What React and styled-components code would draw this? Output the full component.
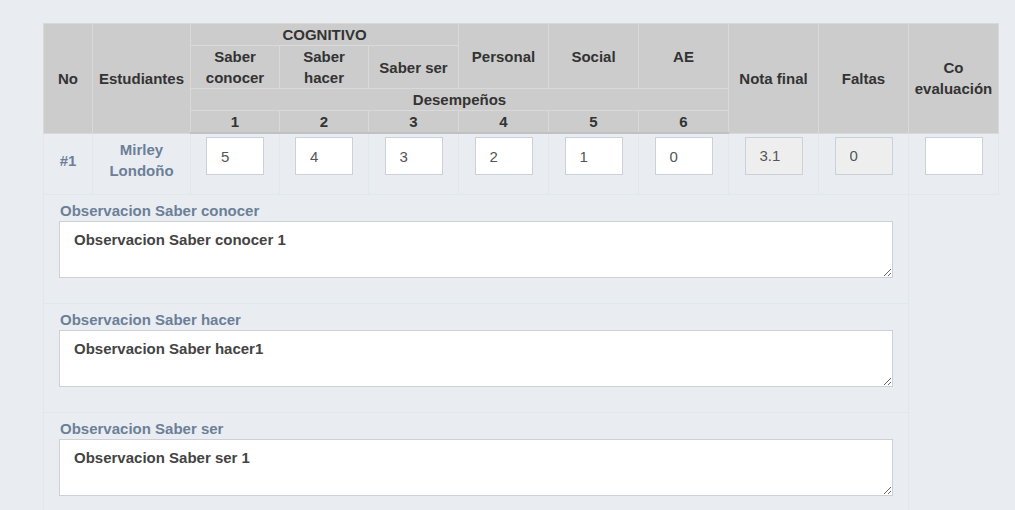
import React from "react";
import styled, { createGlobalStyle } from "styled-components";

const GlobalStyle = createGlobalStyle`
  html, body {
    margin: 0;
    padding: 0;
    overflow: hidden;
    background: #e9edf2;
    font-family: "Liberation Sans", Arial, sans-serif;
    font-size: 15px;
    color: #333;
  }
`;

const columns = [49, 98, 89, 89, 90, 90, 90, 90, 90, 90, 90];

const scores = ["5", "4", "3", "2", "1", "0"];

const observations = [
  { label: "Observacion Saber conocer", value: "Observacion Saber conocer 1" },
  { label: "Observacion Saber hacer", value: "Observacion Saber hacer1" },
  { label: "Observacion Saber ser", value: "Observacion Saber ser 1" },
];

export default function App() {
  return (
    <Page>
      <GlobalStyle />
      <Table>
        <colgroup>
          {columns.map((w, i) => (
            <col key={i} style={{ width: w }} />
          ))}
        </colgroup>
        <thead>
          <tr>
            <Th rowSpan={4}>No</Th>
            <Th rowSpan={4}>Estudiantes</Th>
            <Th colSpan={3}>COGNITIVO</Th>
            <Th rowSpan={2}>Personal</Th>
            <Th rowSpan={2}>Social</Th>
            <Th rowSpan={2}>AE</Th>
            <Th rowSpan={4}>Nota final</Th>
            <Th rowSpan={4}>Faltas</Th>
            <Th rowSpan={4}>Co evaluación</Th>
          </tr>
          <tr>
            <Th>Saber conocer</Th>
            <Th>Saber hacer</Th>
            <Th>Saber ser</Th>
          </tr>
          <tr>
            <Th colSpan={6}>Desempeños</Th>
          </tr>
          <tr>
            {[1, 2, 3, 4, 5, 6].map((n) => (
              <Th key={n} $last>
                {n}
              </Th>
            ))}
          </tr>
        </thead>
        <tbody>
          <tr>
            <Td>
              <Student>#1</Student>
            </Td>
            <Td>
              <Student>Mirley Londoño</Student>
            </Td>
            {scores.map((s, i) => (
              <Td key={i}>
                <Field defaultValue={s} />
              </Td>
            ))}
            <Td>
              <Field defaultValue="3.1" disabled />
            </Td>
            <Td>
              <Field defaultValue="0" disabled />
            </Td>
            <Td>
              <Field defaultValue="" />
            </Td>
          </tr>
          {observations.map((o) => (
            <tr key={o.label}>
              <ObsCell colSpan={10}>
                <Label>{o.label}</Label>
                <Note defaultValue={o.value} />
              </ObsCell>
            </tr>
          ))}
        </tbody>
      </Table>
    </Page>
  );
}

const Page = styled.div`
  padding: 23px 0 0 43px;
`;

const Table = styled.table`
  width: 955px;
  table-layout: fixed;
  border-collapse: collapse;
`;

const Th = styled.th`
  background: #cccccc;
  border: 1px solid #d9d9d9;
  border-bottom: ${(p) => (p.$last ? "2px solid #c1c1c1" : "1px solid #d9d9d9")};
  padding: 0 3px;
  line-height: 21px;
  font-weight: bold;
  text-align: center;
  vertical-align: middle;
  color: #333;
`;

const Td = styled.td`
  border: 1px solid #dfe7ef;
  padding: 3px 8px 4px;
  text-align: center;
  vertical-align: top;
  &:nth-child(-n + 2) {
    vertical-align: middle;
  }
`;

const Student = styled.span`
  display: block;
  font-weight: bold;
  line-height: 21px;
  color: #6c7f98;
  padding-bottom: 6px;
`;

const Field = styled.input`
  display: block;
  box-sizing: border-box;
  width: 58px;
  height: 38px;
  margin: 0 auto 15px;
  padding: 0 0 0 14px;
  border: 1px solid #ccd1d9;
  border-radius: 0;
  background: ${(p) => (p.disabled ? "#eeeeee" : "#ffffff")};
  font-family: "Liberation Sans", Arial, sans-serif;
  font-size: 15px;
  color: #555;
  -webkit-text-fill-color: #555;
  opacity: 1;
  outline: none;
`;

const ObsCell = styled.td`
  border: 1px solid #dfe7ef;
  padding: 6px 16px 6px;
  text-align: left;
`;

const Label = styled.label`
  display: block;
  font-weight: bold;
  line-height: 20px;
  color: #6c7f98;
`;

const Note = styled.textarea`
  display: block;
  box-sizing: border-box;
  width: 834px;
  height: 57px;
  margin: 0 0 19px -1px;
  padding: 8px 14px;
  border: 1px solid #ccd1d9;
  border-radius: 0;
  background: #fff;
  font-family: "Liberation Sans", Arial, sans-serif;
  font-size: 15px;
  line-height: 20px;
  font-weight: bold;
  color: #444;
  outline: none;
`;
